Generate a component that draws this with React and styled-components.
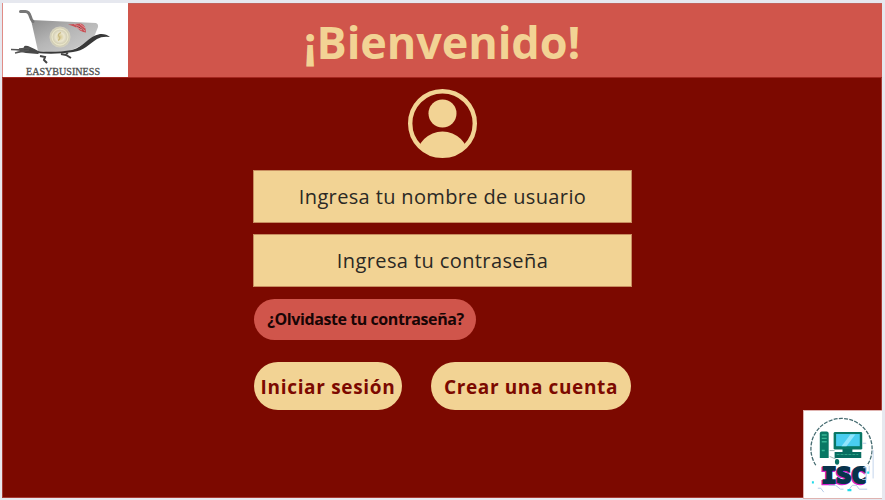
import React from "react";
import styled, { createGlobalStyle } from "styled-components";

const cream = "#f2d394";
const coral = "#d0554b";
const maroon = "#7c0900";

const GlobalStyle = createGlobalStyle`
  * { box-sizing: border-box; }
  body { margin: 0; background: #e6e8ef; font-family: "Open Sans", "Noto Sans", sans-serif; }
`;

const Page = styled.div`
  width: 885px;
  height: 500px;
  padding: 3px 3px 2px 2px;
  overflow: hidden;
`;

const Screen = styled.main`
  height: 100%;
  display: flex;
  flex-direction: column;
  background: ${maroon};
  box-shadow: inset 0 0 0 1px rgba(208, 110, 105, 0.5);
`;

const Header = styled.header`
  height: 75px;
  flex: none;
  display: flex;
  background: ${coral};
  border-top: 1px solid #c2625c;
  border-bottom: 1px solid #a5261f;
`;

const BrandLogo = styled.svg`
  width: 126px;
  height: 74px;
  margin-top: -1px;
  flex: none;
  border-left: 1px solid #e08c86;
  background: #fff;
`;

const Title = styled.h1`
  flex: 1;
  margin: 0 126px 0 0;
  padding: 7px 0 0 0;
  color: ${cream};
  font-size: 45px;
  line-height: 61px;
  font-weight: 700;
  letter-spacing: ${(p) => p.$tracking}px;
  text-align: center;
  white-space: nowrap;
`;

const Form = styled.form`
  width: 379px;
  margin: 11px 0 0 251px;
  display: flex;
  flex-direction: column;
`;

const Avatar = styled.svg`
  width: 70px;
  height: 70px;
  margin: 0 0 11px 154px;
`;

const Field = styled.input`
  width: 379px;
  height: 53px;
  margin-bottom: 11px;
  padding: 0;
  border: 1px solid #c88d60;
  border-radius: 0;
  outline: 0;
  background: ${cream};
  font-family: "Open Sans", sans-serif;
  font-size: 20px;
  letter-spacing: ${(p) => p.$tracking}px;
  text-align: center;
  &::placeholder { color: #2b2925; opacity: 1; }
`;

const Pill = styled.button`
  width: ${(p) => p.$width}px;
  height: 48px;
  padding: 1px 0 0;
  border: 0;
  border-radius: 24px;
  background: ${cream};
  color: ${maroon};
  font-family: "Open Sans", sans-serif;
  font-size: 19px;
  font-weight: 700;
  letter-spacing: ${(p) => p.$tracking}px;
  white-space: nowrap;
`;

const ForgotPill = styled(Pill)`
  height: 41px;
  margin: 1px 0 0 1px;
  padding: 0 0 2px 1px;
  border-radius: 20.5px;
  background: ${coral};
  color: #180505;
  font-size: 16px;
`;

const Actions = styled.div`
  display: flex;
  justify-content: space-between;
  margin: 22px 1px 0 1px;
`;

const Footer = styled.footer`
  display: flex;
  justify-content: flex-end;
  margin-top: auto;
`;

const PartnerLogo = styled.svg`
  width: 79px;
  height: 89px;
  border: 1px solid #dfb3b0;
  border-right: 0;
  background: #fff;
`;

function CartLogo() {
  return (
    <BrandLogo viewBox="3 3 125 74" role="img" aria-label="Easybusiness">
      <defs>
        <linearGradient id="basket" x1="0" x2="1" y1="0" y2="1">
          <stop offset="0" stopColor="#8e8e8e" />
          <stop offset=".45" stopColor="#b6b6b6" />
          <stop offset="1" stopColor="#d2d2d2" />
        </linearGradient>
        <radialGradient id="coin">
          <stop offset="0" stopColor="#d6c88e" />
          <stop offset=".4" stopColor="#ebe6d0" />
          <stop offset=".75" stopColor="#cdc8ae" />
          <stop offset="1" stopColor="#d6d3c1" />
        </radialGradient>
      </defs>
      <path d="M31 20 96 23q2.500 1 2 4L94 37 82 45 70 51 54 53 38 51Z" fill="url(#basket)" />
      <path d="M20.500 11.500h5c6 0 3.500 7 7.500 10" fill="none" stroke="#777" strokeWidth="3" strokeLinecap="round" />
      <path d="M36 51c13 1.500 24 1 36-1 12-3 16-14 28-16q6-.5 10 3-8-1-13 2c-8 5-13 12-24 13-13 2-25 2-37 1Z" fill="#383838" />
      <path d="M16 51q7-1 8-4 0-2 4-1 5 2 12 6l-2 2q-11 0-22-3Z" fill="#484848" />
      <path d="M11 49.500 24 50m-9 3 14-3m-10-1 11-1" stroke="#555" strokeWidth="1.3" />
      <path d="m40 56 5 1-1 3 3 3m14-9 5 1 5 3m-5-4 2-1" fill="none" stroke="#444" strokeWidth="2" />
      <circle cx="60" cy="37" r="10.5" fill="url(#coin)" />
      <circle cx="60" cy="37" r="8" fill="none" stroke="#e9e5c8" strokeWidth="1.3" />
      <path d="M61 32.500q-4 2-2 4t-1 4" fill="none" stroke="#c9b980" strokeWidth="1.2" />
      <path d="m68 24.500 13-1q5 2 5 9-6-1-8-4-3-2-10-4Z" fill="#c94e54" />
      <path d="m74 24 6 3 5 4m-5-7 5 4m-9-1 6 3" stroke="#e6a8ab" strokeWidth=".8" />
      <text x="26" y="75" textLength="74" lengthAdjust="spacingAndGlyphs" fontFamily="Liberation Serif, serif" fontSize="11" fill="#444" stroke="#555" strokeWidth=".3">EASYBUSINESS</text>
    </BrandLogo>
  );
}

function ComputerLogo() {
  return (
    <PartnerLogo viewBox="803 409 79 89" preserveAspectRatio="none" role="img" aria-label="ISC">
      <path d="M815 464.500a31 31 0 1 1 52 0" fill="none" stroke="#456b70" strokeWidth="1.3" strokeDasharray="4 1.3" />
      <path d="M819 432q0-2 2-2h5q2 0 2 2v25h-9Z" fill="#087763" />
      <path d="M821 433.500h5m-5 3.500h5m-5 3.500h5m-5 9h3" stroke="#35b694" strokeWidth="1.500" />
      <rect x="833" y="430.500" width="29" height="18" rx="1.500" fill="#087765" />
      <rect x="835.500" y="432.500" width="24" height="12.500" fill="#49cdf0" />
      <path d="m841 445 9-12h5l-9 12Z" fill="#90e5fc" />
      <path d="M842 448h10v3h9v6h-27v-6h8Z" fill="#086c60" />
      <path d="M836 453.500h22" stroke="#2ca184" strokeWidth="1.200" strokeDasharray="3 1" />
      <path d="M829 449.500h5m-5 6 7 3v3" fill="none" stroke="#8caaa7" strokeWidth=".8" />
      <ellipse cx="836.500" cy="461" rx="2.200" ry="3" fill="#087064" />
      <g fontFamily="DejaVu Sans Mono, monospace" fontSize="22.500" fontWeight="700">
        <text x="820" y="483.300" textLength="45" lengthAdjust="spacingAndGlyphs" fill="#d41fd0" stroke="#d41fd0" strokeWidth="2.500">ISC</text>
        <text x="821" y="482.300" textLength="45" lengthAdjust="spacingAndGlyphs" fill="#08334b" stroke="#08334b" strokeWidth="2.300">ISC</text>
      </g>
      <path d="M817 488h3l3 4m5-7h7l5 4h3m5 1 4-5h4l3 4h8m-1-47h-4m1 25h3v12h-4" fill="none" stroke="#b6cbe7" strokeWidth="1" />
      <path d="M873 449v29m-4-13v8" stroke="#c3d4ec" />
      <path d="M811 482h2m34 8h4m16-18h2" stroke="#20dbe9" strokeWidth="2.200" />
    </PartnerLogo>
  );
}

export default function App() {
  return (
    <>
      <GlobalStyle />
      <Page>
        <Screen>
          <Header>
            <CartLogo />
            <Title $tracking={-0.1}>¡Bienvenido!</Title>
          </Header>
          <Form onSubmit={(e) => e.preventDefault()}>
            <Avatar viewBox="0 0 70 70" aria-hidden="true">
              <defs><clipPath id="portrait"><circle cx="35.500" cy="34.500" r="33" /></clipPath></defs>
              <circle cx="35.500" cy="34.500" r="32.300" fill="none" stroke={cream} strokeWidth="4.400" />
              <circle cx="35.500" cy="24.500" r="14" fill={cream} />
              <ellipse cx="35.500" cy="68.500" rx="26" ry="26" fill={cream} clipPath="url(#portrait)" />
            </Avatar>
            <Field aria-label="Usuario" placeholder="Ingresa tu nombre de usuario" $tracking={0.36} />
            <Field aria-label="Contraseña" type="password" placeholder="Ingresa tu contraseña" $tracking={0.4} />
            <ForgotPill type="button" $width={222} $tracking={-0.42}>¿Olvidaste tu contraseña?</ForgotPill>
            <Actions>
              <Pill type="submit" $width={148} $tracking={0.68}>Iniciar sesión</Pill>
              <Pill type="button" $width={200} $tracking={0.62}>Crear una cuenta</Pill>
            </Actions>
          </Form>
          <Footer><ComputerLogo /></Footer>
        </Screen>
      </Page>
    </>
  );
}
